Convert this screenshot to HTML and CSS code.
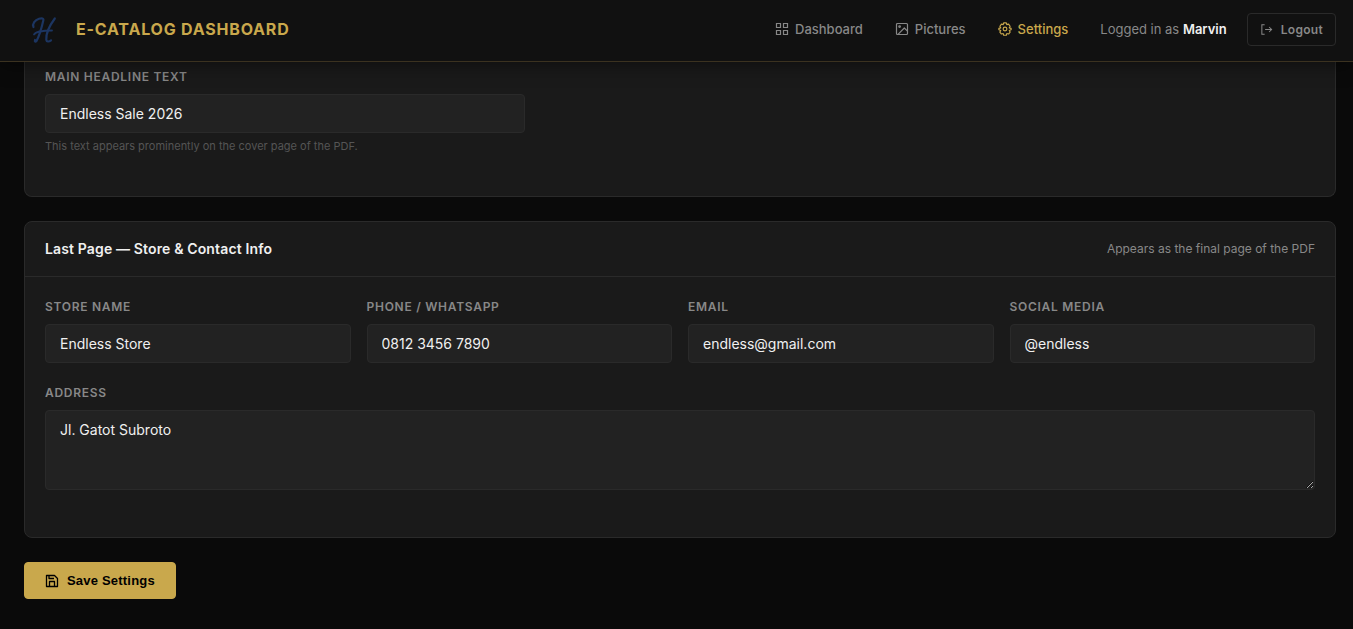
FILE: index.html
```html
<!DOCTYPE html>
<html lang="en">
<head>
<meta charset="utf-8">
<title>E-Catalog Dashboard</title>
<link rel="stylesheet" href="styles.css">
</head>
<body>
<header class="topbar">
  <div class="brand">
    <svg class="logo" viewBox="0 0 40 40" fill="none" stroke="#1c3561" stroke-width="2.200" stroke-linecap="round" stroke-linejoin="round">
      <path d="M9.500 18C8 15 11 11 15 9.800C17.800 9 20 9.300 19.300 11.500C17.800 18 15.500 26.500 12.500 32C11.500 33 10.500 32.500 11 31"/>
      <path d="M30.800 9.500C26 16 21.800 25 22.300 30.800C22.600 33 25 33 27 31.300"/>
      <path d="M10 25.500C12 22 19 21.500 28 21.500" stroke-width="1.800"/>
    </svg>
    <span class="brand-name">E-CATALOG DASHBOARD</span>
  </div>
  <nav class="nav">
    <a class="nav-link">
      <svg class="icon" viewBox="0 0 14 14" fill="none" stroke="currentColor" stroke-width="1.200"><path d="M1.500 1.500h4v4h-4zM8.500 1.500h4v4h-4zM1.500 8.500h4v4h-4zM8.500 8.500h4v4h-4z"/></svg>
      Dashboard
    </a>
    <a class="nav-link">
      <svg class="icon" viewBox="0 0 14 14" fill="none" stroke="currentColor" stroke-width="1.200" stroke-linejoin="round"><rect x="1.500" y="1.500" width="11" height="11" rx="1"/><circle cx="4.600" cy="4.600" r=".8"/><path d="M3 12.300L9.300 6l3.200 3.200"/></svg>
      Pictures
    </a>
    <a class="nav-link active">
      <svg class="icon" viewBox="0 0 24 24" fill="none" stroke="currentColor" stroke-width="2" stroke-linejoin="round"><path d="M9.700 1.500h4.600l.8 3 3-.8 2.700 3.600-1.500 2.700 3.200 1v2.400l-3.200 1.200 1.500 2.700-2.700 3.300-3-.8-.8 2.900H9.700l-.8-2.900-3 .8-2.700-3.300 1.500-2.700-3.200-1.200V11l3.200-1-1.500-2.700L5.900 3.700l3 .8z"/><circle cx="12" cy="12" r="3.200"/></svg>
      Settings
    </a>
  </nav>
  <span class="user">Logged in as <strong>Marvin</strong></span>
  <button class="logout" type="button">
    <svg class="icon-out" viewBox="0 0 14 14" fill="none" stroke="currentColor" stroke-width="1.100"><path d="M5 2H2v10h3M5.500 7h7M9.800 4.300L12.500 7 9.800 9.700"/></svg>
    Logout
  </button>
</header>
<main class="page">
  <section class="card card-cover">
    <div class="field">
      <label class="label" for="headline">MAIN HEADLINE TEXT</label>
      <input class="control control-half" id="headline" value="Endless Sale 2026">
      <p class="hint">This text appears prominently on the cover page of the PDF.</p>
    </div>
  </section>
  <section class="card">
    <div class="card-head">
      <h2 class="card-title">Last Page — Store &amp; Contact Info</h2>
      <span class="card-note">Appears as the final page of the PDF</span>
    </div>
    <div class="card-body">
      <div class="grid">
        <div class="field"><label class="label" for="store">STORE NAME</label><input class="control" id="store" value="Endless Store"></div>
        <div class="field"><label class="label" for="phone">PHONE / WHATSAPP</label><input class="control" id="phone" value="0812 3456 7890"></div>
        <div class="field"><label class="label" for="email">EMAIL</label><input class="control" id="email" value="endless@gmail.com"></div>
        <div class="field"><label class="label" for="social">SOCIAL MEDIA</label><input class="control" id="social" value="@endless"></div>
      </div>
      <div class="field">
        <label class="label" for="address">ADDRESS</label>
        <textarea class="control area" id="address" spellcheck="false">Jl. Gatot Subroto</textarea>
      </div>
    </div>
  </section>
  <button class="save" type="button">
    <svg class="icon-save" viewBox="0 0 14 14" fill="none" stroke="currentColor" stroke-width="1.300" stroke-linejoin="round"><path d="M1.500 1.500h8l3 3v8h-11zM4.500 12.500v-5h5v5M4 1.500v3h5"/></svg>
    Save Settings
  </button>
</main>
</body>
</html>
```
FILE: styles.css
```css
* { box-sizing: border-box; }
body {
  margin: 0;
  height: 629px;
  overflow: hidden;
  background: #0a0a0a;
  color: #f0f0f0;
  font-family: Inter, "Liberation Sans", sans-serif;
  font-size: 14px;
}
.topbar {
  position: relative;
  z-index: 1;
  display: flex;
  align-items: center;
  height: 62px;
  padding: 0 17px 2px 24px;
  background: #111;
  border-bottom: 1px solid #3b3220;
  box-shadow: 0 2px 20px rgba(0, 0, 0, .5);
}
.brand { display: flex; align-items: center; gap: 12px; margin-right: auto; padding-bottom: 2px; }
.logo { width: 40px; height: 40px; }
.brand-name { color: #c9a84c; font-size: 16px; font-weight: 700; letter-spacing: .8px; }
.nav { display: flex; gap: 32px; padding-bottom: 1px; }
.nav-link { display: flex; align-items: center; gap: 6px; color: #888; font-size: 13px; font-weight: 500; }
.nav-link.active { color: #c9a84c; }
.icon { width: 14px; height: 14px; }
.user { margin-left: 32px; padding-bottom: 1px; color: #888; font-size: 13px; }
.user strong { color: #f0f0f0; font-weight: 600; }
.logout {
  display: flex;
  align-items: center;
  gap: 8px;
  height: 33px;
  margin-left: 20px;
  padding: 0 12px;
  border: 1px solid #2a2a2a;
  border-radius: 4px;
  background: transparent;
  color: #888;
  font: 600 12px Inter, sans-serif;
  letter-spacing: .3px;
}
.icon-out { width: 13px; height: 13px; }
.page { padding: 0 17px 0 24px; }
.card { margin-bottom: 24px; border: 1px solid #2a2a2a; border-radius: 8px; background: #1a1a1a; }
.card-cover { height: 135px; padding: 5px 20px 0; border-top: 0; border-radius: 0 0 8px 8px; }
.card-head { display: flex; align-items: center; justify-content: space-between; height: 55px; padding: 0 20px 2px; border-bottom: 1px solid #2a2a2a; }
.card-title { margin: 0; font-size: 14px; font-weight: 600; letter-spacing: .14px; }
.card-note { color: #888; font-size: 12px; }
.card-body { height: 260px; padding: 20px; }
.grid { display: grid; grid-template-columns: repeat(4, 1fr); gap: 16px; margin-bottom: 20px; }
.field { display: flex; flex-direction: column; align-items: flex-start; }
.label { margin-bottom: 8px; color: #888; font-size: 12px; font-weight: 600; line-height: 19px; letter-spacing: .72px; }
.control {
  width: 100%;
  height: 39px;
  padding: 10px 14px;
  border: 1px solid #2a2a2a;
  border-radius: 4px;
  outline: 0;
  background: #222;
  color: #f0f0f0;
  font: 14px Inter, sans-serif;
}
.control-half { width: 480px; }
.area { height: 80px; resize: vertical; }
.hint { margin: 4px 0 0; color: #555; font-size: 11px; line-height: 18px; }
.save {
  display: flex;
  align-items: center;
  gap: 8px;
  width: 152px;
  height: 37px;
  padding: 0 20px;
  border: 1px solid #c9a84c;
  border-radius: 4px;
  background: #c9a84c;
  color: #000;
  font: 700 13px "Liberation Sans", Arial, sans-serif;
  letter-spacing: .2px;
  white-space: nowrap;
}
.icon-save { flex: none; width: 14px; height: 14px; }
```
